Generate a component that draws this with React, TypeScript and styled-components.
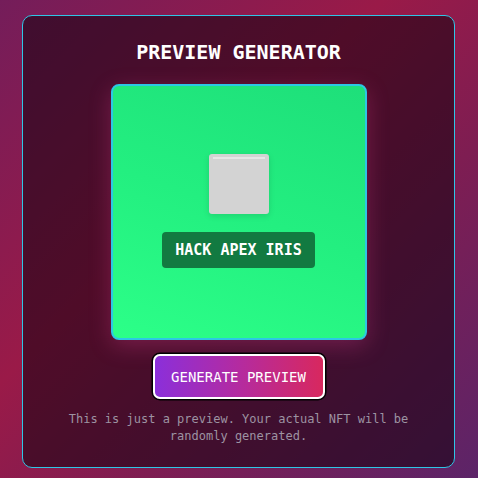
import React from 'react';
import styled, { createGlobalStyle } from 'styled-components';

const GlobalStyle = createGlobalStyle`
  html, body {
    margin: 0;
    padding: 0;
  }
  body {
    font-family: "DejaVu Sans Mono", "Liberation Mono", monospace;
  }
`;

const Screen = styled.div`
  width: 478px;
  height: 478px;
  box-sizing: border-box;
  padding: 15px 23px 10px 22px;
  background: linear-gradient(135deg, #741d5a 0%, #9a1a48 40%, #7e1d52 65%, #5c2468 100%);
`;

const Card = styled.div`
  box-sizing: border-box;
  height: 453px;
  border: 1px solid #2fc6e6;
  border-radius: 10px;
  background: rgba(18, 2, 14, 0.55);
  display: flex;
  flex-direction: column;
  align-items: center;
  padding: 24px 24px 0;
`;

const Title = styled.h1`
  margin: 0;
  font-size: 20px;
  line-height: 24px;
  font-weight: bold;
  color: #ffffff;
`;

const PreviewBox = styled.div`
  margin-top: 20px;
  width: 256px;
  height: 256px;
  box-sizing: border-box;
  border: 2px solid #2cc8e4;
  border-radius: 8px;
  background: linear-gradient(200deg, #1edf7a 0%, #23ef80 50%, #2cff88 100%);
  box-shadow: 0 6px 22px rgba(236, 72, 153, 0.28);
  display: flex;
  flex-direction: column;
  align-items: center;
  padding-top: 68px;
`;

const Tile = styled.div`
  position: relative;
  width: 60px;
  height: 60px;
  border-radius: 3px;
  background: #d3d3d3;
  box-shadow: 0 2px 6px rgba(0, 0, 0, 0.12);

  &::before {
    content: '';
    position: absolute;
    top: 3px;
    left: 4px;
    right: 4px;
    height: 2px;
    background: #e6e6e6;
  }
`;

const NameTag = styled.div`
  margin-top: 18px;
  height: 36px;
  box-sizing: border-box;
  padding: 0 13px;
  border-radius: 4px;
  background: #127a41;
  color: #ffffff;
  font-size: 15px;
  font-weight: bold;
  display: flex;
  align-items: center;
`;

const GenerateButton = styled.button`
  margin-top: 14px;
  width: 172px;
  height: 45px;
  box-sizing: border-box;
  border: 2px solid #ffffff;
  border-radius: 7px;
  box-shadow: 0 0 0 1.5px #000000;
  background: linear-gradient(90deg, #8b2fda 0%, #b42ba0 50%, #d8285e 100%);
  color: #ffffff;
  font-family: "DejaVu Sans Mono", "Liberation Mono", monospace;
  font-size: 14px;
  padding: 0;
  cursor: pointer;
`;

const Note = styled.p`
  margin: 12px 0 0;
  font-size: 12px;
  line-height: 17px;
  color: #9d93a2;
  text-align: center;
`;

export default function App() {
  return (
    <>
      <GlobalStyle />
      <Screen>
        <Card>
          <Title>PREVIEW GENERATOR</Title>
          <PreviewBox>
            <Tile />
            <NameTag>HACK APEX IRIS</NameTag>
          </PreviewBox>
          <GenerateButton>GENERATE PREVIEW</GenerateButton>
          <Note>
            This is just a preview. Your actual NFT will be
            <br />
            randomly generated.
          </Note>
        </Card>
      </Screen>
    </>
  );
}
